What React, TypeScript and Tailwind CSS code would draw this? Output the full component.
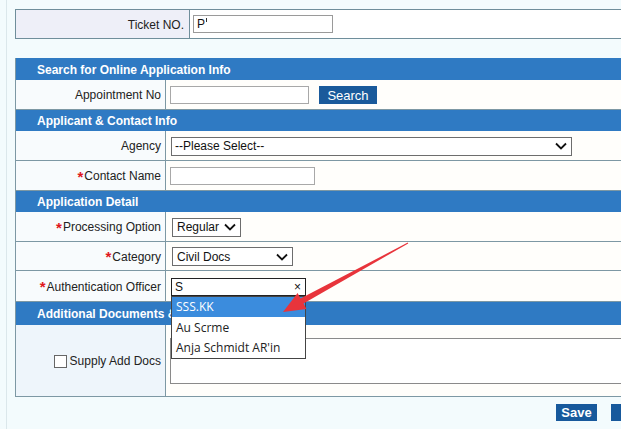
import React from "react";

const font = { fontFamily: '"Liberation Sans", Arial, sans-serif' };

function Chevron() {
  return (
    <svg width="12" height="8" viewBox="0 0 12 8" className="shrink-0">
      <path d="M1 1.5 L6 6.5 L11 1.5" fill="none" stroke="#111" strokeWidth="1.8" />
    </svg>
  );
}

function Header({ title, h }: { title: string; h: string }) {
  return (
    <div className={`${h} bg-[#2f7ac3] flex items-center pl-[21px] pt-[1px] text-white font-bold text-[12px]`}>
      {title}
    </div>
  );
}

function Row({
  label,
  req,
  h,
  children,
  labelBg = "bg-[#f8fbfd]",
}: {
  label: React.ReactNode;
  req?: boolean;
  h: string;
  children?: React.ReactNode;
  labelBg?: string;
}) {
  return (
    <div className={`${h} flex border-b border-[#7d98a4]`}>
      <div
        className={`w-[150px] shrink-0 border-r border-[#7d98a4] ${labelBg} flex items-center justify-end pr-[4px] pt-[1px] text-[12px] text-[#222]`}
      >
        {req && <span className="text-[#e0161b] text-[15px] leading-none mr-[1px] font-bold">*</span>}
        {label}
      </div>
      <div className="flex-1 bg-[#fffefb] flex items-center pl-[4px]">{children}</div>
    </div>
  );
}

export default function App() {
  return (
    <div className="relative w-[621px] h-[429px] overflow-hidden bg-[#f3fbfd]" style={font}>
      <div className="ml-[6px] border-l border-[#dbe7eb] h-full pl-[8px] pt-[9px]">
        {/* Ticket table */}
        <div className="w-[700px] h-[30px] flex border border-[#6f8e9b] bg-white">
          <div className="w-[174px] shrink-0 border-r border-[#6f8e9b] bg-[#eeeff8] flex items-center justify-end pr-[5px] pt-[1px] text-[12px] text-[#222]">
            Ticket NO.
          </div>
          <div className="flex-1 flex items-center pl-[3px]">
            <div className="w-[140px] h-[18px] border border-[#9a9a9a] bg-white text-[12px] leading-[16px] pl-[3px] text-[#111]">
              P<span className="inline-block w-[1px] h-[4px] bg-[#333] align-top mt-[2px] ml-[1px]" />
            </div>
          </div>
        </div>

        {/* Main table */}
        <div className="w-[700px] mt-[19px] border-l border-[#7d98a4]">
          <Header title="Search for Online Application Info" h="h-[22px]" />
          <Row label="Appointment No" h="h-[30px]">
            <div className="w-[139px] h-[18px] border border-[#a8a8a8] bg-white" />
            <button className="ml-[10px] w-[58px] h-[18px] bg-[#1a5a9b] text-white text-[13px] leading-[18px] pt-[1px]">
              Search
            </button>
          </Row>
          <Header title="Applicant & Contact Info" h="h-[21px]" />
          <Row label="Agency" h="h-[30px]">
            <div className="ml-[1px] mt-[1px] w-[401px] h-[19px] border border-[#6d6d6d] bg-white flex items-center justify-between pl-[3px] pr-[4px] text-[12px] text-[#111]">
              <span>--Please Select--</span>
              <Chevron />
            </div>
          </Row>
          <Row label="Contact Name" req h="h-[30px]">
            <div className="mt-[1px] w-[145px] h-[18px] border border-[#a8a8a8] bg-white" />
          </Row>
          <Header title="Application Detail" h="h-[21px]" />
          <Row label="Processing Option" req h="h-[30px]">
            <div className="ml-[2px] mt-[1px] w-[69px] h-[19px] border border-[#6d6d6d] bg-white flex items-center justify-between pl-[4px] pr-[4px] text-[12px] text-[#111]">
              <span>Regular</span>
              <Chevron />
            </div>
          </Row>
          <Row label="Category" req h="h-[29px]">
            <div className="ml-[2px] mt-[1px] w-[121px] h-[19px] border border-[#6d6d6d] bg-white flex items-center justify-between pl-[4px] pr-[4px] text-[12px] text-[#111]">
              <span>Civil Docs</span>
              <Chevron />
            </div>
          </Row>
          <Row label="Authentication Officer" req h="h-[31px]">
            <div className="relative ml-[1px] mt-[1px] w-[135px] h-[18px] border border-[#222] bg-white flex items-center justify-between pl-[3px] pr-[4px] text-[12px] text-[#111]">
              <span>S</span>
              <span className="text-[12px] leading-none">×</span>
              <div
                className="absolute left-[-1px] top-[17px] w-[135px] border border-[#444] bg-white z-10 text-[12px]"
                style={{ fontFamily: '"Open Sans", "Noto Sans", sans-serif' }}
              >
                <div className="h-[20px] bg-[#3b8cdd] text-white flex items-center pl-[4px] pt-[1px]">SSS.KK</div>
                <div className="h-[21px] text-[#222] flex items-center pl-[4px] pt-[1px]">Au Scrme</div>
                <div className="h-[20px] text-[#222] flex items-center pl-[4px] pt-[1px]">Anja Schmidt AR'in</div>
              </div>
            </div>
          </Row>
          <Header title="Additional Documents & Remarks" h="h-[23px]" />
          <Row
            label={
              <span className="flex items-center gap-[3px]">
                <span className="w-[13px] h-[13px] border border-[#666] bg-white inline-block" />
                <span>Supply Add Docs</span>
              </span>
            }
            h="h-[72px]"
            labelBg="bg-[#eef5fb]"
          >
            <div className="self-start mt-[13px] w-full h-[46px] border border-[#8a8a8a] bg-white" />
          </Row>
        </div>

        <div className="flex gap-[14px] pl-[541px] mt-[7px]">
          <button className="w-[41px] h-[17px] shrink-0 bg-[#17599c] text-white text-[13px] font-bold leading-[17px]">
            Save
          </button>
          <button className="w-[41px] h-[17px] shrink-0 bg-[#17599c]" />
        </div>
      </div>

      {/* red arrow annotation */}
      <svg className="absolute inset-0 pointer-events-none z-20" width="621" height="429">
        <polygon
          points="283,312 306.5,309 303.5,303.6 408.2,243.4 407.8,242.6 300.5,298.4 297.6,293.1"
          fill="#e8343b"
        />
      </svg>
    </div>
  );
}
